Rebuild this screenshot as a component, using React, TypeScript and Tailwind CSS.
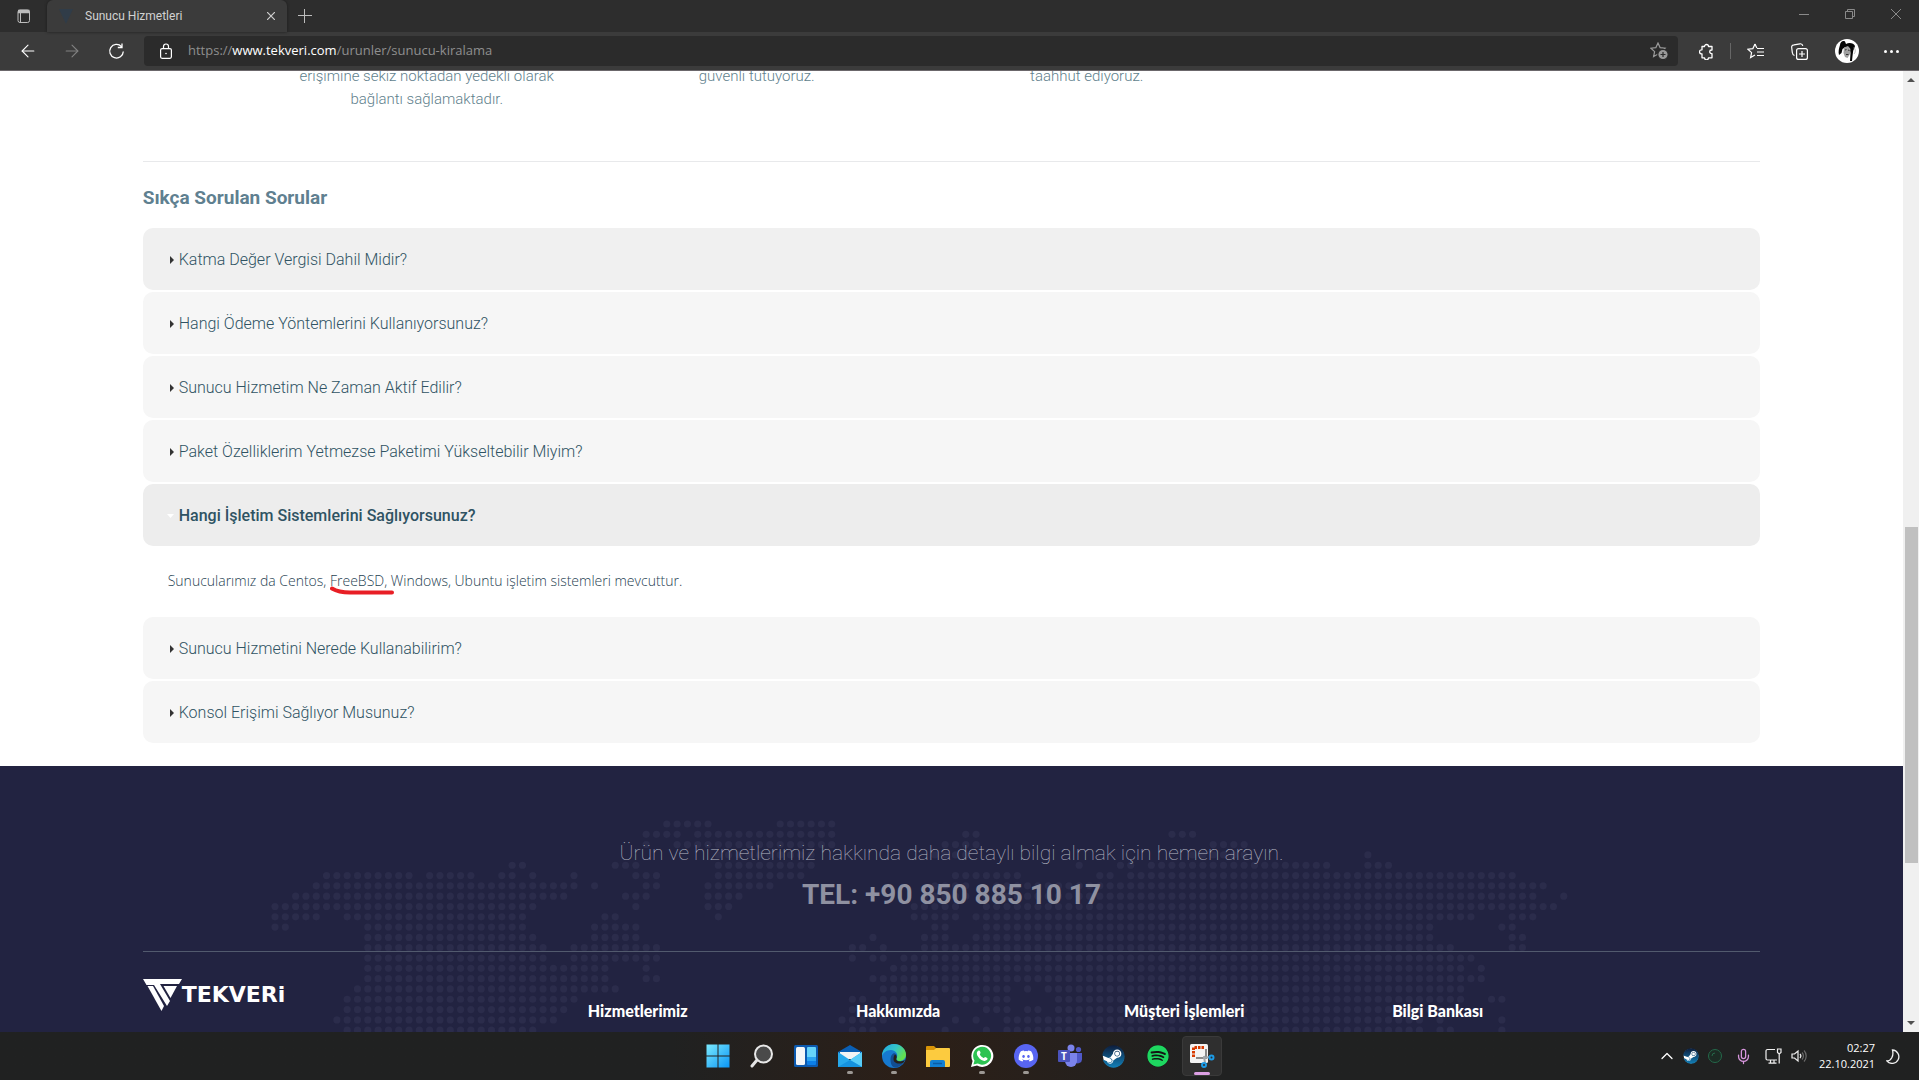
import React, { useState } from 'react';
import { ArrowLeft, ArrowRight, ChevronUp, Mic } from 'lucide-react';
import { FaDiscord, FaSpotify, FaSteam } from 'react-icons/fa';

const iconButton = 'flex shrink-0 items-center justify-center';

/* ---------- Browser window ---------- */

function TabStrip() {
  return (
    <div className="flex h-8 bg-[#2d2d2d] text-[#b8b8b8]">
      <button aria-label="Tab actions" className={`${iconButton} w-[47px]`}>
        <svg width="14" height="14" viewBox="0 0 14 14" fill="none" stroke="#bdbdbd">
          <rect x="1" y="1" width="11.5" height="12.5" rx="2" />
          <path d="M1 2.5h11.5" strokeWidth="3.5" />
          <path d="M3.5 4v9" />
        </svg>
      </button>
      <div className="flex w-60 items-center rounded-t-md bg-[#3b3b3b] pl-3 pr-1 shadow-[0_0_3px_#1c1c1c]">
        <svg width="14" height="15" viewBox="0 0 14 15" className="shrink-0" fill="#303c48">
          <path d="M0 0h14L7 15z" />
        </svg>
        <span className="ml-3 flex-1 truncate font-[Roboto,sans-serif] text-xs text-[#d2d2d2]">Sunucu Hizmetleri</span>
        <button aria-label="Close tab" className={`${iconButton} size-6`}>
          <svg width="8" height="8" viewBox="0 0 8 8" stroke="#cfcfcf" strokeWidth="1.2">
            <path d="M0 0l8 8M8 0L0 8" />
          </svg>
        </button>
      </div>
      <button aria-label="New tab" className={`${iconButton} w-9`}>
        <svg width="14" height="14" viewBox="0 0 14 14" stroke="#bdbdbd">
          <path d="M6.500 0v14M0 6.500h14" />
        </svg>
      </button>
      <div className="ml-auto flex">
        <button aria-label="Minimize" className={`${iconButton} w-[46px] pb-1`}>
          <svg width="10" height="10" viewBox="0 0 10 10" stroke="#8a8a8a"><path d="M0 5.500h10" /></svg>
        </button>
        <button aria-label="Restore" className={`${iconButton} w-[46px] pb-1`}>
          <svg width="10" height="10" viewBox="0 0 10 10" fill="none" stroke="#8a8a8a">
            <path d="M.5 2.500h7v7h-7zM2.500 2.500v-2h7v7h-2" />
          </svg>
        </button>
        <button aria-label="Close window" className={`${iconButton} w-[46px] pb-1`}>
          <svg width="10" height="10" viewBox="0 0 10 10" stroke="#8a8a8a"><path d="M0 0l10 10M10 0L0 10" /></svg>
        </button>
      </div>
    </div>
  );
}

function Avatar() {
  return (
    <svg width="24" height="24" viewBox="0 0 24 24">
      <circle cx="12" cy="12" r="12" fill="#fff" />
      <path d="M5 6C5 3 8 1 10 2.500L11 5c3-2 8-1 9 2l-1 3c-1 1-1 4-1.500 7L17 22h-2l.500-8-1-5-4-1-3 2-1 4-2.500 2C3 13 4 9 5 6z" fill="#050505" />
      <path d="M9 8.500l4-1.500 2.500 3-.500 5-2.500 4-2.500-1-1.500-4z" fill="#a0a0a0" />
      <path d="M10 11l1.500-.5M13 11l1.500.5M11 15.500h2.500" stroke="#333" />
      <path d="M18.500 9c2 0 2.500 4 .5 6" stroke="#bbb" fill="none" />
    </svg>
  );
}

const starPath = 'M8 1l2.100 4.600 5 .6-3.700 3.400 1 5L8 12.100 3.600 14.600l1-5L.9 6.200l5-.6z';

function Toolbar() {
  return (
    <div className="flex h-[39px] items-center border-b border-[#6b676b] bg-[#3b3b3b] pl-2">
      <button aria-label="Back" className={`${iconButton} w-10 text-white`}><ArrowLeft size={20} strokeWidth={1.300} /></button>
      <button aria-label="Forward" className={`${iconButton} ml-1 w-10 text-[#828282]`}><ArrowRight size={20} strokeWidth={1.300} /></button>
      <button aria-label="Refresh" className={`${iconButton} ml-1 w-10`}>
        <svg width="17" height="17" viewBox="0 0 17 17" fill="none" stroke="#fff" strokeWidth="1.300">
          <path d="M13.500 3.600A6.800 6.800 0 1 0 15.300 8.500M14 .5v4H9.800" />
        </svg>
      </button>
      <div className="ml-2 flex h-[30px] flex-1 items-center rounded bg-[#2b2b2b] pl-4 pr-2">
        <svg width="12" height="16" viewBox="0 0 12 16" className="shrink-0" fill="none" stroke="#fff" strokeWidth="1.200">
          <rect x=".6" y="5.600" width="10.800" height="9.700" rx="1.500" />
          <path d="M3.500 5.500V3.500a2.500 2.500 0 0 1 5 0v2" />
          <circle cx="6" cy="10.500" r=".8" fill="#fff" stroke="none" />
        </svg>
        <a href="https://www.tekveri.com/urunler/sunucu-kiralama" className="ml-4 flex-1 font-['Open_Sans',sans-serif] text-[13px] text-[#8f8f8f]">
          https://<span className="text-white">www.tekveri.com</span>/urunler/sunucu-kiralama
        </a>
        <button aria-label="Add to favorites" className={iconButton}>
          <svg width="20" height="18" viewBox="0 0 20 18" fill="none" stroke="#9a9a9a" strokeWidth="1.200">
            <path d={starPath} />
            <circle cx="13" cy="12.500" r="5.200" fill="#9a9a9a" stroke="#2b2b2b" />
            <path d="M10.500 12.500h5M13 10v5" stroke="#2b2b2b" />
          </svg>
        </button>
      </div>
      <div className="flex items-center">
        <button aria-label="Extensions" className={`${iconButton} w-14`}>
          <svg width="15" height="17" viewBox="0 0 15 17" fill="none" stroke="#fff" strokeWidth="1.300" strokeLinejoin="round">
            <path d="M3 3.500h2.500a2 2 0 1 1 4 0H13V7h-.5a1.800 1.800 0 1 0 0 3.600h.5v4.200H9.500a2 2 0 0 1-4 0H3v-4H2.500a1.800 1.800 0 0 1 0-4H3z" />
          </svg>
        </button>
        <span className="-ml-1 h-4 w-px bg-[#666]" />
        <button aria-label="Favorites" className={`${iconButton} w-12`}>
          <svg width="17" height="16" viewBox="0 0 17 16" fill="none" stroke="#fff" strokeWidth="1.200">
            <path d="M8 1L5.900 5.600l-5 .6 3.700 3.400-1 5L8 12.100M8 1l1.800 4" />
            <path d="M10 5.500h7M10 9h7M10 12.500h7" />
          </svg>
        </button>
        <button aria-label="Collections" className={`${iconButton} w-10`}>
          <svg width="17" height="17" viewBox="0 0 17 17" fill="none" stroke="#fff" strokeWidth="1.200">
            <path d="M3.500 12.500C2 12 1.500 11 1.300 9.500L.7 4.500C.5 3 1.500 2 3 1.800L9 .8c1.500-.2 2.500.5 2.800 2" />
            <rect x="5.600" y="5.600" width="10.800" height="10.800" rx="2" />
            <path d="M11 8v6M8 11h6" />
          </svg>
        </button>
        <button aria-label="Profile" className={`${iconButton} ml-1 w-12`}><Avatar /></button>
        <button aria-label="Settings and more" className={`${iconButton} w-12 gap-[3px] pr-2`}>
          <span className="size-[3px] rounded-full bg-white" />
          <span className="size-[3px] rounded-full bg-white" />
          <span className="size-[3px] rounded-full bg-white" />
        </button>
      </div>
    </div>
  );
}

function ScrollBar() {
  return (
    <div className="flex w-4 shrink-0 flex-col items-center bg-[#f0f0f0]">
      <svg width="8" height="17" viewBox="0 0 8 17" fill="#505050"><path d="M0 11l4-4 4 4z" /></svg>
      <div className="grow-[439]" />
      <div className="w-[13px] grow-[336] bg-[#c0c0c0]" />
      <div className="grow-[152]" />
      <svg width="8" height="17" viewBox="0 0 8 17" fill="#505050"><path d="M0 6l4 4 4-4z" /></svg>
    </div>
  );
}

/* ---------- Page ---------- */

const features = [
  ['erişimine sekiz noktadan yedekli olarak', 'bağlantı sağlamaktadır.'],
  ['güvenli tutuyoruz.'],
  ['taahhut ediyoruz.'],
];

const questions: { title: string; highlighted?: boolean; answer?: React.ReactNode }[] = [
  { title: 'Katma Değer Vergisi Dahil Midir?', highlighted: true },
  { title: 'Hangi Ödeme Yöntemlerini Kullanıyorsunuz?' },
  { title: 'Sunucu Hizmetim Ne Zaman Aktif Edilir?' },
  { title: 'Paket Özelliklerim Yetmezse Paketimi Yükseltebilir Miyim?' },
  {
    title: 'Hangi İşletim Sistemlerini Sağlıyorsunuz?',
    answer: (
      <>
        Sunucularımız da Centos,{' '}
        <span className="relative">
          FreeBSD,
          <svg className="absolute left-0 top-full -mt-1" width="65" height="9" viewBox="0 0 65 9" fill="none" stroke="#e81e25" strokeWidth="4" strokeLinecap="round">
            <path d="M2 2.500C7 5.500 12 6.500 20 6.500H62" />
          </svg>
        </span>{' '}
        Windows, Ubuntu işletim sistemleri mevcuttur.
      </>
    ),
  },
  { title: 'Sunucu Hizmetini Nerede Kullanabilirim?' },
  { title: 'Konsol Erişimi Sağlıyor Musunuz?' },
];

function Faq() {
  const [open, setOpen] = useState(4);
  return (
    <div className="flex flex-col gap-0.5">
      {questions.map((q, i) => {
        const isOpen = open === i;
        return (
          <div key={q.title}>
            <h3>
              <button
                aria-expanded={isOpen}
                onClick={() => setOpen(isOpen ? -1 : i)}
                className={`flex h-[62px] w-full items-center rounded-[10px] pt-0.5 pl-6 text-left text-base text-[#2f5363] ${
                  isOpen ? 'bg-[#ededed] font-medium' : q.highlighted ? 'bg-[#f0f0f0] font-light' : 'bg-[#f6f6f6] font-light'
                }`}
              >
                <svg width="8" height="8" viewBox="0 0 8 8" className="mr-1">
                  {isOpen ? <path d="M0 2h7L3.500 6z" fill="#fff" /> : <path d="M3 0l4 4-4 4z" fill="#333" />}
                </svg>
                {q.title}
              </button>
            </h3>
            {isOpen && q.answer && (
              <p className="px-[25px] py-6 font-['Open_Sans',sans-serif] text-sm leading-[21px] font-light text-[#1f4252]">{q.answer}</p>
            )}
          </div>
        );
      })}
    </div>
  );
}

/* Filled column spans of each row of the dotted world map. */
const mapRows: number[][][] = [
  [[38, 42], [49, 54]],
  [[36, 39], [41, 54], [67, 68], [87, 89]],
  [[36, 36], [39, 54], [65, 68], [91, 94]],
  [[43, 52], [64, 67], [89, 94], [106, 106]],
  [[23, 24], [33, 35], [43, 52], [78, 78], [82, 83], [85, 102], [106, 108]],
  [[5, 13], [15, 19], [22, 23], [25, 25], [29, 29], [35, 37], [43, 51], [66, 72], [80, 81], [83, 120]],
  [[4, 29], [31, 31], [36, 37], [42, 48], [64, 67], [70, 123]],
  [[2, 28], [34, 36], [42, 45], [63, 67], [69, 122], [125, 125]],
  [[0, 25], [35, 35], [42, 44], [62, 66], [69, 124]],
  [[0, 4], [7, 24], [32, 33], [43, 43], [62, 66], [68, 116], [120, 122]],
  [[0, 1], [9, 24], [31, 35], [64, 65], [69, 112], [119, 120]],
  [[9, 25], [31, 35], [58, 58], [63, 65], [68, 112], [120, 121]],
  [[9, 26], [29, 37], [56, 57], [59, 59], [63, 114], [120, 121]],
  [[9, 26], [29, 37], [56, 56], [58, 59], [61, 116]],
  [[9, 32], [36, 36], [60, 115], [117, 117]],
  [[9, 32], [36, 37], [58, 117]],
  [[8, 33], [59, 71], [73, 73], [75, 115]],
  [[7, 29], [56, 57], [59, 64], [66, 71], [76, 115], [118, 119]],
  [[7, 28], [56, 57], [69, 71], [73, 74], [76, 114]],
  [[6, 27], [55, 59], [66, 66], [68, 68], [71, 111], [113, 113], [119, 119]],
  [[7, 25], [56, 58], [65, 65], [69, 69], [71, 111], [113, 114], [119, 119]],
];
const PITCH = 10.31;

function WorldMap() {
  return (
    <div className="absolute inset-x-0 top-[54px] flex justify-center">
      <svg width="1361" height="216" viewBox="0 0 1361 216" fill="#2b2c4b">
        {mapRows.flatMap((spans, row) =>
          spans.flatMap(([from, to]) =>
            Array.from({ length: to - from + 1 }, (_, i) => (
              <circle key={`${row}-${from + i}`} cx={4 + (from + i) * PITCH} cy={4 + row * PITCH} r="3.600" />
            )),
          ),
        )}
      </svg>
    </div>
  );
}

function Logo() {
  return (
    <a href="#" className="flex items-center self-start text-white">
      <svg width="39" height="32" viewBox="0 0 39 32" fill="#fff">
        <path d="M0 0h39l-3 5H17l10 17-3 5L11 6H3.500z" />
        <path d="M4.500 7h5.500l11 20-2.500 5z" />
        <path d="M20.500 7H34l-6.500 12z" />
      </svg>
      <span className="font-['DejaVu_Sans',sans-serif] text-[22px] leading-8 font-bold">TEKVERi</span>
    </a>
  );
}

function Footer() {
  return (
    <footer className="relative flex-1 bg-[#222341] pt-[72px]">
      <WorldMap />
      <div className="relative mx-auto w-[85%]">
        <div className="border-b border-[#525a6e] pb-[37px] text-center text-[#8f91a1]">
          <p className="text-[21px] leading-[30px] font-thin text-[#b4b6c2]">Ürün ve hizmetlerimiz hakkında daha detaylı bilgi almak için hemen arayın.</p>
          <p className="mt-2 text-[28px] leading-[38px] font-bold">TEL: +90 850 885 10 17</p>
        </div>
        <div className="mt-[27px] grid grid-cols-[445fr_268fr_268fr_268fr_368fr] font-[Lato,sans-serif] text-base font-black text-white">
          <Logo />
          <h4 className="pt-5">Hizmetlerimiz</h4>
          <h4 className="pt-5">Hakkımızda</h4>
          <h4 className="pt-5">Müşteri İşlemleri</h4>
          <h4 className="pt-5">Bilgi Bankası</h4>
        </div>
      </div>
    </footer>
  );
}

function Page() {
  return (
    <main className="flex min-w-0 flex-1 flex-col overflow-hidden bg-white font-[Roboto,sans-serif]">
      <div className="mx-auto w-[85%]">
        <div className="-mt-1.5 flex h-24 px-[119px] text-center text-[15px] leading-[23px] font-light text-[#5f7f8d]">
          {features.map((lines) => (
            <p key={lines[0]} className="w-[330px]">
              {lines.map((line) => (
                <span key={line} className="block">{line}</span>
              ))}
            </p>
          ))}
        </div>
        <hr className="border-[#e8e9eb]" />
        <h2 className="pt-6 pb-[18px] text-[19px] leading-6 font-bold text-[#5f8090]">Sıkça Sorulan Sorular</h2>
        <Faq />
      </div>
      <div className="h-[23px] shrink-0" />
      <Footer />
    </main>
  );
}

/* ---------- Taskbar ---------- */

function StartIcon() {
  return (
    <svg width="24" height="24" viewBox="0 0 24 24">
      <defs>
        <linearGradient id="start" x1="0" y1="0" x2="1" y2="1">
          <stop offset="0" stopColor="#7beaff" />
          <stop offset="1" stopColor="#0a95f5" />
        </linearGradient>
      </defs>
      <path d="M.5.5h11v11H.5zM12.500.5h11v11h-11zM.5 12.500h11v11H.5zM12.500 12.500h11v11h-11z" fill="url(#start)" />
    </svg>
  );
}

function SearchIcon() {
  return (
    <svg width="24" height="24" viewBox="0 0 24 24">
      <path d="M7 16l-5 6" stroke="#e4e4e4" strokeWidth="3" strokeLinecap="round" />
      <circle cx="13.500" cy="10" r="8.500" fill="#4a4a4a" stroke="#e8e8e8" strokeWidth="2" />
    </svg>
  );
}

function WidgetsIcon() {
  return (
    <svg width="24" height="24" viewBox="0 0 24 24">
      <rect y="1" width="24" height="22" rx="1.500" fill="#0c5ab0" />
      <rect x="2" y="3" width="9" height="18" rx="1.500" fill="#f4f6f8" />
      <path d="M13 4a1 1 0 0 1 1-1h7a1 1 0 0 1 1 1v9h-9z" fill="#66d4fb" />
      <path d="M13 13h9v4h-9z" fill="#2ba4f2" />
      <path d="M13 17h9v3a1 1 0 0 1-1 1h-7a1 1 0 0 1-1-1z" fill="#0c7fe8" />
    </svg>
  );
}

function MailIcon() {
  return (
    <svg width="24" height="24" viewBox="0 0 24 24">
      <path d="M0 8L12 1l12 7v3H0z" fill="#0a5fb4" />
      <path d="M2 8h20v7H2z" fill="#f4f4f4" />
      <path d="M0 8l12 8 12-8v15H0z" fill="#27a8ea" />
      <path d="M24 8v15L12 16z" fill="#58cdf8" />
      <path d="M0 23l12-7 12 7z" fill="#1592de" />
    </svg>
  );
}

function EdgeIcon() {
  return (
    <svg width="24" height="24" viewBox="0 0 24 24">
      <defs>
        <linearGradient id="edgeTop" x1="0" y1="0" x2="1" y2=".5">
          <stop offset="0" stopColor="#21a7e0" />
          <stop offset=".55" stopColor="#34c5c9" />
          <stop offset="1" stopColor="#63e04f" />
        </linearGradient>
      </defs>
      <circle cx="12" cy="12" r="12" fill="#1679cf" />
      <path d="M0 12C0 5 5.500 0 12 0s12 5 12 10.500c0 4-3 6.500-6.500 6.500-3 0-4-1.500-3-3C17 10 13 6 9 6 4 6 1 9 0 12z" fill="url(#edgeTop)" />
      <path d="M8.500 15c0-3 1.500-5 3.500-6 3 1 3.500 3 2.500 5s1 3.500 3.500 3.500c2 0 3.500-.5 4.800-1.300C21 20.500 17 23.500 13 23.500c-3 0-4.500-4-4.500-8.500z" fill="#124d92" />
      <path d="M14.500 14c-1 2 1 3.400 3.500 3.400 2 0 3.700-.8 5-1.700l-1.500 2.700c-5 2.600-10 .6-10-3.400 0-2 .5-3.500 1.500-4.500 1.600 1 1.800 2.500 1.500 3.500z" fill="#262019" />
    </svg>
  );
}

function FolderIcon() {
  return (
    <svg width="24" height="24" viewBox="0 0 24 24">
      <path d="M0 3a1 1 0 0 1 1-1h7l2 2-1 3H0z" fill="#d99407" />
      <path d="M0 6h8l2-2h13a1 1 0 0 1 1 1v17a1 1 0 0 1-1 1H0z" fill="#fccb3f" />
      <path d="M4 18a2 2 0 0 1 2-2h11a2 2 0 0 1 2 2v5H4z" fill="#1280d3" />
      <path d="M7 19.500h9" stroke="#0a5ca6" strokeWidth="1.500" />
    </svg>
  );
}

function WhatsAppIcon() {
  return (
    <svg width="24" height="24" viewBox="0 0 24 24">
      <path d="M1 23l1.600-6A11 11 0 1 1 7 21.500z" fill="#fff" />
      <path d="M3.400 20.600l1.100-4.100a9 9 0 1 1 3.300 3.100z" fill="#2cc352" />
      <path d="M8.600 6.500c.5-.2 1-.2 1.300.5l.7 1.700c.1.500-.8 1.200-.8 1.600.7 1.700 2 3 3.800 3.700.5 0 1.200-1.200 1.600-1.100l2 1c.6.400.2 1.700-.4 2.200-.8.700-2 1-3.300.6-3-.9-5-2.800-6.300-5.500-.9-2-.1-4 1.400-4.700z" fill="#fff" />
    </svg>
  );
}

function DiscordIcon() {
  return (
    <span className="flex size-6 items-center justify-center rounded-full bg-[#5865f2] text-white"><FaDiscord size={16} /></span>
  );
}

function TeamsIcon() {
  return (
    <svg width="24" height="24" viewBox="0 0 24 24">
      <circle cx="20.500" cy="5.500" r="2.600" fill="#5059c9" />
      <path d="M17 9h7v6.500a4 4 0 0 1-7 2.500z" fill="#5059c9" />
      <circle cx="13" cy="4" r="3.500" fill="#7b83eb" />
      <path d="M7 9h12v8a6 6 0 0 1-12 0z" fill="#7b83eb" />
      <rect y="6" width="12" height="12" rx="1" fill="#4b53bc" />
      <text x="6" y="15.500" textAnchor="middle" fill="#fff" fontSize="10" fontWeight="700" fontFamily="Open Sans, sans-serif">T</text>
    </svg>
  );
}

function SteamIcon({ size }: { size: number }) {
  return (
    <svg width={size} height={size} viewBox="0 0 24 24">
      <defs>
        <linearGradient id="steam" x1="0" y1="0" x2="0" y2="1">
          <stop offset="0" stopColor="#0d1d3c" />
          <stop offset="1" stopColor="#1280b8" />
        </linearGradient>
      </defs>
      <circle cx="12" cy="12" r="11" fill="#fff" />
      <FaSteam size={24} fill="url(#steam)" />
    </svg>
  );
}

function SpotifyIcon() {
  return (
    <span className="flex size-[22px] items-center justify-center rounded-full bg-[#141414] text-[#1ed760]"><FaSpotify size={22} /></span>
  );
}

function SnippingIcon() {
  return (
    <svg width="26" height="26" viewBox="0 0 26 26" fill="none">
      <rect x="1" y="1" width="18" height="19" rx="1.500" fill="#f3f3f3" />
      <path d="M4.500 14V4.500H15" stroke="#d83b01" strokeWidth="3" strokeDasharray="2.500 1" />
      <path d="M7 15h10V6" stroke="#8a8a8a" strokeWidth="2" />
      <path d="M14 15l7-1M15 13l1 7" stroke="#9fa5aa" strokeWidth="2" />
      <circle cx="22.500" cy="14.500" r="2" stroke="#1c9be6" strokeWidth="2" />
      <circle cx="15" cy="22" r="2" stroke="#1c9be6" strokeWidth="2" />
    </svg>
  );
}

const apps: { name: string; icon: React.ReactNode; state?: 'running' | 'active' }[] = [
  { name: 'Start', icon: <StartIcon /> },
  { name: 'Search', icon: <SearchIcon /> },
  { name: 'Widgets', icon: <WidgetsIcon /> },
  { name: 'Mail', icon: <MailIcon />, state: 'running' },
  { name: 'Edge', icon: <EdgeIcon />, state: 'running' },
  { name: 'File Explorer', icon: <FolderIcon /> },
  { name: 'WhatsApp', icon: <WhatsAppIcon />, state: 'running' },
  { name: 'Discord', icon: <DiscordIcon />, state: 'running' },
  { name: 'Teams', icon: <TeamsIcon /> },
  { name: 'Steam', icon: <SteamIcon size={23} /> },
  { name: 'Spotify', icon: <SpotifyIcon /> },
  { name: 'Snipping Tool', icon: <SnippingIcon />, state: 'active' },
];

function Taskbar() {
  return (
    <div className="grid h-12 shrink-0 grid-cols-[1fr_auto_1fr] items-center bg-linear-to-r from-[#202121] from-35% via-[#2c1f17] via-48% to-[#202121] to-62%">
      <div />
      <div className="flex gap-1">
        {apps.map((app) => (
          <button
            key={app.name}
            aria-label={app.name}
            className={`relative flex size-10 items-center justify-center rounded ${app.state === 'active' ? 'border border-[#3a3a3a] bg-[#2f2f2f]' : ''}`}
          >
            {app.icon}
            {app.state === 'running' && <span className="absolute bottom-[2px] h-[3px] w-1.5 rounded-full bg-[#9c9894]" />}
            {app.state === 'active' && <span className="absolute bottom-0 h-[3px] w-4 rounded-full bg-[#dc9fe4]" />}
          </button>
        ))}
      </div>
      <div className="flex items-center justify-end pr-4 text-white">
        <button aria-label="Show hidden icons" className={`${iconButton} w-6`}><ChevronUp size={20} strokeWidth={1.500} /></button>
        <button aria-label="Steam" className={`${iconButton} w-6`}><SteamIcon size={16} /></button>
        <button aria-label="Status" className={`${iconButton} w-6`}>
          <svg width="14" height="14" viewBox="0 0 14 14" fill="#1c2b24" stroke="#25694a">
            <circle cx="7" cy="7" r="6.500" />
            <path d="M4 7a3 3 0 0 1 3-3" fill="none" />
          </svg>
        </button>
        <button aria-label="Microphone" className={`${iconButton} w-8 text-[#d795dc]`}><Mic size={17} strokeWidth={1.800} /></button>
        <button aria-label="Network" className={`${iconButton} w-7`}>
          <svg width="17" height="16" viewBox="0 0 17 16" fill="none" stroke="#f0f0f0" strokeWidth="1.200">
            <path d="M10 1.500H2.500a1.500 1.500 0 0 0-1.500 1.500v7.500a1.500 1.500 0 0 0 1.500 1.500H12M5.500 12v3M9 12v3M3.500 15.200h8" />
            <path d="M12.500 1h3.500v3.500l-1.800 1.500-1.700-1.500zM14.200 6v9.500" />
          </svg>
        </button>
        <button aria-label="Volume" className={`${iconButton} w-6`}>
          <svg width="16" height="14" viewBox="0 0 16 14" fill="none" stroke="#f0f0f0" strokeWidth="1.200">
            <path d="M1 5v4h2.500L7 12V2L3.500 5z" />
            <path d="M9 5a3 3 0 0 1 0 4" />
            <path d="M11 3.500a5 5 0 0 1 0 7M13 1.500a8 8 0 0 1 0 11" stroke="#6a6a6a" />
          </svg>
        </button>
        <button className="ml-2 w-14 text-right font-['Open_Sans',sans-serif] text-[11px] leading-4">
          <span className="block">02:27</span>
          <span className="block">22.10.2021</span>
        </button>
        <button aria-label="Focus assist" className={`${iconButton} ml-2 w-5`}>
          <svg width="14" height="15" viewBox="0 0 14 15" fill="none" stroke="#f0f0f0" strokeWidth="1.300">
            <path d="M6.500 1a6.700 6.700 0 1 1-5.500 11c4 0 7-5 5.500-11z" />
          </svg>
        </button>
      </div>
    </div>
  );
}

export default function App() {
  return (
    <div className="flex h-screen flex-col overflow-hidden">
      <header className="shrink-0">
        <TabStrip />
        <Toolbar />
      </header>
      <div className="flex min-h-0 flex-1">
        <Page />
        <ScrollBar />
      </div>
      <Taskbar />
    </div>
  );
}
